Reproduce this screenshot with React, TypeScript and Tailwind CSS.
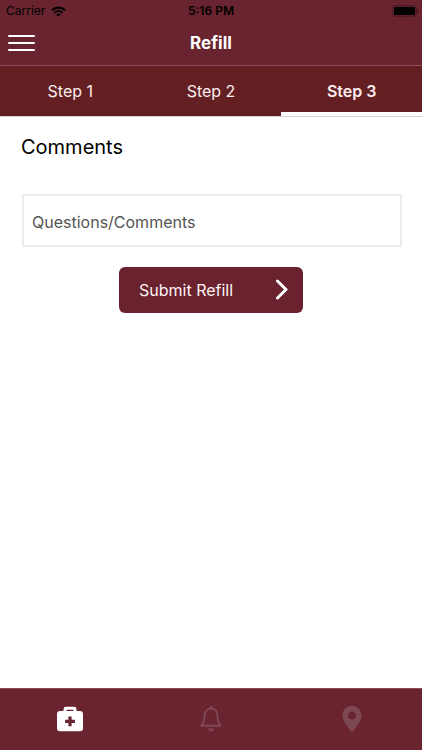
import { useState } from "react";

const steps = ["Step 1", "Step 2", "Step 3"];

function StatusBar() {
  return (
    <div className="grid h-[22px] grid-cols-3 items-center px-1.5 text-black">
      <div className="flex items-center gap-1.5">
        <span className="text-[12px] leading-4">Carrier</span>
        <svg width="15" height="11" viewBox="0 0 15 11" aria-hidden="true">
          <path d="M1 4.2a9.3 9.3 0 0 1 13 0" fill="none" stroke="currentColor" strokeWidth="2.2" />
          <path d="M3.4 6.8a5.9 5.9 0 0 1 8.2 0" fill="none" stroke="currentColor" strokeWidth="1.9" />
          <path d="M5.2 8.5a3.4 3.4 0 0 1 4.6 0L7.5 10.8z" fill="currentColor" />
        </svg>
      </div>
      <span className="text-center text-[12px] font-semibold leading-4">5:16 PM</span>
      <svg className="-mr-1 justify-self-end" width="28" height="12" viewBox="0 0 28 12" aria-hidden="true">
        <rect x="0.8" y="0.8" width="23.5" height="10.4" rx="2.5" fill="none" stroke="#421620" />
        <rect x="2" y="2" width="21" height="8" rx="1" fill="#000" />
        <path d="M25.400 4v4c1-.3 1.400-1 1.400-2s-.4-1.700-1.400-2z" fill="#421620" />
      </svg>
    </div>
  );
}

function BriefcaseIcon() {
  return (
    <svg width="28" height="26" viewBox="0 0 28 26" aria-hidden="true">
      <path
        fill="#fff"
        fillRule="evenodd"
        d="M7.500 5V3.200Q7.500.800 10 .800h8q2.500 0 2.500 2.400V5H24q3 0 3 3v14.200q0 3-3 3H4q-3 0-3-3V8q0-3 3-3zM10.600 5h6.800V3.800h-6.800zM12.400 10.400v3.300H9.100v3.200h3.300v3.300h3.200v-3.300h3.300v-3.200h-3.300v-3.300z"
      />
    </svg>
  );
}

function BellIcon() {
  return (
    <svg width="24" height="28" viewBox="0 0 24 28" aria-hidden="true">
      <path
        d="M12 3.600c-4.300 0-6.400 3.200-6.400 7.400 0 5.600-1.400 7.300-3.400 9.800h19.600c-2-2.500-3.400-4.200-3.400-9.800 0-4.200-2.100-7.400-6.400-7.400z"
        fill="none"
        stroke="#7f4651"
        strokeWidth="2"
        strokeLinejoin="round"
      />
      <path d="M10.500 3.600v-1a1.500 1.500 0 0 1 3 0v1z" fill="#7f4651" />
      <path d="M9 23.600h6q-.5 2.700-3 2.700t-3-2.700z" fill="#7f4651" />
    </svg>
  );
}

function PinIcon() {
  return (
    <svg width="20" height="28" viewBox="0 0 20 28" aria-hidden="true">
      <path
        fill="#7c4953"
        fillRule="evenodd"
        d="M10 1C4.700 1 .4 5.100.4 10.300.4 17 10 27 10 27s9.600-10 9.600-16.700C19.600 5.100 15.300 1 10 1zm0 5.600a4 4 0 1 1 0 8 4 4 0 0 1 0-8z"
      />
    </svg>
  );
}

export default function App() {
  const [active, setActive] = useState(2);
  const [comments, setComments] = useState("");

  return (
    <div className="flex min-h-screen flex-col bg-white font-['Inter',sans-serif]">
      <header className="border-b border-[#8a505a] bg-[#6a242f]">
        <StatusBar />
        <div className="grid h-[43px] grid-cols-3 items-center px-2 pb-0.5">
          <button type="button" aria-label="Menu" className="flex w-[27px] flex-col gap-[5px]">
            <span className="h-0.5 rounded-full bg-white" />
            <span className="h-0.5 rounded-full bg-white" />
            <span className="h-0.5 rounded-full bg-white" />
          </button>
          <h1 className="text-center text-[17px] font-bold leading-6 text-white">Refill</h1>
        </div>
      </header>

      <div role="tablist" className="grid h-[51px] grid-cols-3 border-b border-[#d8cccd] bg-[#641f22] text-[16px] text-[#fbeeee]">
        {steps.map((step, i) => (
          <button
            key={step}
            type="button"
            role="tab"
            aria-selected={i === active}
            onClick={() => setActive(i)}
            className={
              i === active
                ? "border-b-4 border-white pt-1 font-semibold"
                : "border-b-4 border-transparent pt-1"
            }
          >
            {step}
          </button>
        ))}
      </div>

      <main className="flex flex-1 flex-col px-5">
        <label htmlFor="comments" className="mt-4 pl-px text-[20px] leading-7 text-black">
          Comments
        </label>
        <input
          id="comments"
          type="text"
          placeholder="Questions/Comments"
          value={comments}
          onChange={(e) => setComments(e.target.value)}
          className="ml-0.5 mt-[33px] h-[53px] border-2 border-[#ececec] px-2 pt-0.5 text-[16px] text-black outline-none placeholder:text-[#555555]"
        />
        <button
          type="button"
          className="mt-5 flex h-[46px] w-[184px] items-center justify-between self-center rounded-md bg-[#6a222f] pl-5 pr-3.5 text-[16px] text-[#fff3f3]"
        >
          Submit Refill
          <svg width="14" height="22" viewBox="0 0 14 22" aria-hidden="true">
            <path d="M2.500 2 11 10.500l-8.500 8.500" fill="none" stroke="#fff" strokeWidth="3" strokeLinecap="round" strokeLinejoin="round" />
          </svg>
        </button>
      </main>

      <nav className="grid h-[62px] grid-cols-3 border-t border-[#8a505a] bg-[#6a2430] pb-0.5">
        <button type="button" aria-label="Refills" className="flex items-center justify-center">
          <BriefcaseIcon />
        </button>
        <button type="button" aria-label="Notifications" className="flex items-center justify-center">
          <BellIcon />
        </button>
        <button type="button" aria-label="Locations" className="flex items-center justify-center">
          <PinIcon />
        </button>
      </nav>
    </div>
  );
}
